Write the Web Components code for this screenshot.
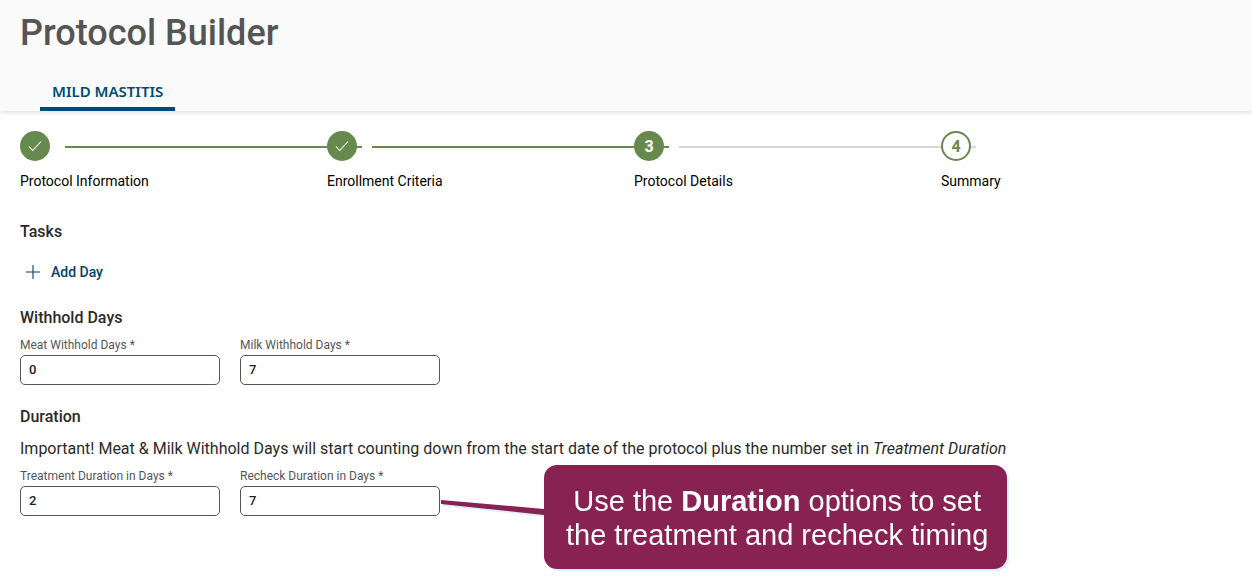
<!DOCTYPE html>
<html lang="en">
<head>
<meta charset="utf-8">
<meta name="viewport" content="width=device-width, initial-scale=1">
<title>Protocol Builder</title>
<style>
  :root {
    --pb-green: #66894d;
    --pb-blue: #004b76;
    --pb-text: #2a2a2a;
    --pb-muted: #53565a;
    --pb-callout: #882253;
  }
  body {
    margin: 0;
    background: #fff;
    color: var(--pb-text);
    font-family: Roboto, "Open Sans", sans-serif;
  }
</style>
</head>
<body>

<pb-app></pb-app>

<script>
/**
 * Page header
 *  - Element: pb-header
 */
class PageHeader extends HTMLElement {

  constructor() {
    super();
    const shadowRoot = this.attachShadow({mode: 'open'});
    shadowRoot.innerHTML = `
      <style>
        :host {
          display: flex;
          flex-direction: column;
          gap: 24px;
          padding: 9px 20px 0;
          background: #fafafa;
          box-shadow: 0 1px 5px rgba(0, 0, 0, 0.16);
        }
        h1 {
          margin: 0;
          color: #555;
          font-size: 36px;
          font-weight: 500;
          line-height: 48px;
        }
        nav {
          display: flex;
          padding: 0 20px;
        }
        a {
          padding: 0 12px 6px;
          border-bottom: 4px solid var(--pb-blue);
          border-radius: 2px 2px 0 0;
          color: var(--pb-blue);
          font: 600 15px/20px "Noto Sans", "Open Sans", sans-serif;
          text-decoration: none;
          text-transform: uppercase;
        }
      </style>
      <h1><slot name="title"></slot></h1>
      <nav><a href="#" aria-current="page"><slot></slot></a></nav>
    `;
  }

}

customElements.define('pb-header', PageHeader);

/**
 * One step of the progress bar
 *  - Element: pb-step
 *  - Attributes: number, state (done | current | next)
 */
class Step extends HTMLElement {

  constructor() {
    super();
    this.attachShadow({mode: 'open'});
  }

  connectedCallback() {
    const done = this.getAttribute('state') === 'done';
    const check = `
      <svg width="14" height="12" viewBox="0 0 14 12" role="img" aria-label="Completed">
        <path d="M1 6.5 L4.7 10.5 L13 1.5" fill="none" stroke="#fff" stroke-width="1.1"/>
      </svg>`;
    this.shadowRoot.innerHTML = `
      <style>
        :host {
          display: flex;
          flex: 1 1 0;
          flex-direction: column;
          gap: 10px;
          min-width: 0;
        }
        .track {
          display: flex;
          align-items: center;
          gap: 15px;
        }
        .marker {
          display: flex;
          flex: none;
          align-items: center;
          justify-content: center;
          box-sizing: border-box;
          width: 30px;
          height: 30px;
          border: 2px solid var(--pb-green);
          border-radius: 50%;
          background: var(--pb-green);
          color: #fff;
          font-size: 16px;
          font-weight: 700;
          z-index: 1;
        }
        /* runs on behind the next marker */
        .line {
          flex: 1;
          height: 2px;
          margin-top: 2px;
          margin-right: -35px;
          background: var(--pb-green);
        }
        :host([state="current"]) .line {
          background: #d8d8d8;
        }
        :host([state="next"]) .marker {
          background: #fff;
          color: var(--pb-green);
        }
        :host([state="next"]) .line {
          flex: none;
          width: 5px;
          margin-left: -15px;
          background: #d8d8d8;
        }
        .label {
          color: #000;
          font-size: 14px;
          line-height: 20px;
        }
      </style>
      <div class="track">
        <span class="marker">${done ? check : this.getAttribute('number')}</span>
        <span class="line"></span>
      </div>
      <span class="label"><slot></slot></span>
    `;
  }

}

customElements.define('pb-step', Step);

/**
 * Titled section
 *  - Element: pb-section
 */
class Section extends HTMLElement {

  constructor() {
    super();
    const shadowRoot = this.attachShadow({mode: 'open'});
    shadowRoot.innerHTML = `
      <style>
        :host {
          display: block;
        }
        h2 {
          margin: 0;
          font-size: 16px;
          font-weight: 500;
          line-height: 24px;
        }
      </style>
      <section>
        <h2><slot name="title"></slot></h2>
        <slot></slot>
      </section>
    `;
  }

}

customElements.define('pb-section', Section);

/**
 * Flat button with a plus icon
 *  - Element: pb-add-button
 */
class AddButton extends HTMLElement {

  constructor() {
    super();
    const shadowRoot = this.attachShadow({mode: 'open'});
    shadowRoot.innerHTML = `
      <style>
        :host {
          display: flex;
        }
        button {
          display: flex;
          align-items: center;
          gap: 11px;
          padding: 6px;
          border: 0;
          background: none;
          color: #00436b;
          font: inherit;
          font-size: 14px;
          font-weight: 500;
          line-height: 20px;
          cursor: pointer;
        }
      </style>
      <button type="button">
        <svg width="14" height="14" viewBox="0 0 14 14" aria-hidden="true">
          <path d="M7 0 V14 M0 7 H14" fill="none" stroke="#00436b" stroke-width="1.1"/>
        </svg>
        <span><slot></slot></span>
      </button>
    `;
  }

}

customElements.define('pb-add-button', AddButton);

/**
 * Labelled text box
 *  - Element: pb-field
 *  - Attributes: label, value
 */
class Field extends HTMLElement {

  constructor() {
    super();
    const shadowRoot = this.attachShadow({mode: 'open'});
    shadowRoot.innerHTML = `
      <style>
        :host {
          display: flex;
          flex-direction: column;
          gap: 2px;
          width: 200px;
        }
        label {
          color: var(--pb-muted);
          font-size: 12px;
          line-height: 16px;
        }
        input {
          box-sizing: border-box;
          width: 100%;
          height: 30px;
          padding: 0 8px 2px;
          border: 1px solid var(--pb-muted);
          border-radius: 5px;
          background: #fff;
          color: #222;
          font: inherit;
          font-size: 13px;
          font-weight: 500;
        }
      </style>
      <label for="input"></label>
      <input id="input" type="text" inputmode="numeric" required>
    `;
  }

  connectedCallback() {
    this.shadowRoot.querySelector('label').textContent = `${this.getAttribute('label')} *`;
    this.shadowRoot.querySelector('input').value = this.getAttribute('value');
  }

}

customElements.define('pb-field', Field);

/**
 * Callout that points at whatever is on its left
 *  - Element: pb-callout
 */
class Callout extends HTMLElement {

  constructor() {
    super();
    const shadowRoot = this.attachShadow({mode: 'open'});
    shadowRoot.innerHTML = `
      <style>
        :host {
          display: flex;
          align-items: flex-start;
          width: max-content;
          filter: drop-shadow(2px 2px 0 #dbeeff);
        }
        svg {
          margin-top: 35px;
        }
        p {
          margin: 0;
          padding: 19px 19px 17px 22px;
          border-radius: 13px;
          background: var(--pb-callout);
          color: #fff;
          font: 29px/34px "Liberation Sans", Arial, sans-serif;
          text-align: center;
        }
      </style>
      <svg width="103" height="18" viewBox="0 0 103 18" aria-hidden="true">
        <path d="M0 0 L103 9 V15 L0 4 Z" fill="#882253"/>
      </svg>
      <p><slot></slot></p>
    `;
  }

}

customElements.define('pb-callout', Callout);

/**
 * Protocol builder page
 *  - Element: pb-app
 */
class App extends HTMLElement {

  constructor() {
    super();
    const shadowRoot = this.attachShadow({mode: 'open'});
    shadowRoot.innerHTML = `
      <style>
        :host {
          display: block;
          min-height: 100vh;
        }
        main {
          display: flex;
          flex-direction: column;
          padding: 20px 4px 64px 20px;
        }
        .steps {
          display: flex;
          margin-bottom: 29px;
        }
        pb-add-button {
          margin: 12px 0 18px;
        }
        .fields {
          display: flex;
          gap: 20px;
          margin-top: 7px;
          position: relative;
        }
        .withhold {
          margin-bottom: 20px;
        }
        .note {
          margin: 8px 0 0;
          font-size: 16px;
          line-height: 24px;
        }
        pb-callout {
          position: absolute;
          top: -3px;
          left: 421px;
        }
      </style>
      <pb-header>
        <span slot="title">Protocol Builder</span>
        Mild Mastitis
      </pb-header>
      <main>
        <div class="steps">
          <pb-step number="1" state="done">Protocol Information</pb-step>
          <pb-step number="2" state="done">Enrollment Criteria</pb-step>
          <pb-step number="3" state="current">Protocol Details</pb-step>
          <pb-step number="4" state="next">Summary</pb-step>
        </div>
        <pb-section>
          <span slot="title">Tasks</span>
          <pb-add-button>Add Day</pb-add-button>
        </pb-section>
        <pb-section class="withhold">
          <span slot="title">Withhold Days</span>
          <div class="fields">
            <pb-field label="Meat Withhold Days" value="0"></pb-field>
            <pb-field label="Milk Withhold Days" value="7"></pb-field>
          </div>
        </pb-section>
        <pb-section>
          <span slot="title">Duration</span>
          <p class="note">Important! Meat &amp; Milk Withhold Days will start counting down from the start date of the protocol plus the number set in <em>Treatment Duration</em></p>
          <div class="fields">
            <pb-field label="Treatment Duration in Days" value="2"></pb-field>
            <pb-field label="Recheck Duration in Days" value="7"></pb-field>
            <pb-callout>Use the <b>Duration</b> options to set<br>the treatment and recheck timing</pb-callout>
          </div>
        </pb-section>
      </main>
    `;
  }

}

customElements.define('pb-app', App);
</script>
</body>
</html>
